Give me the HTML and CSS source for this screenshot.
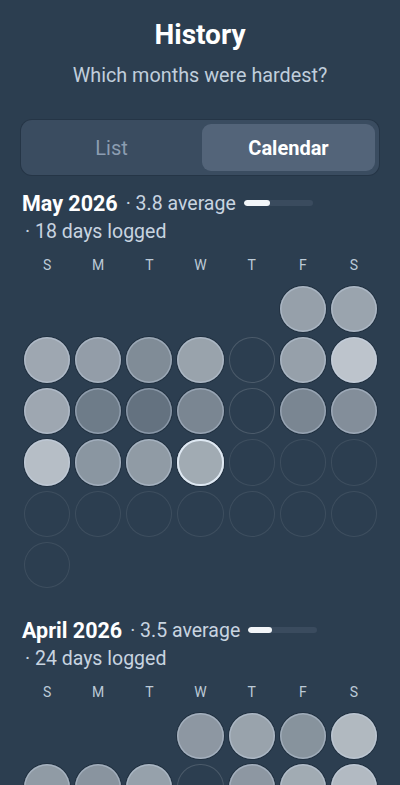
FILE: index.html
```html
<!DOCTYPE html>
<html lang="en">
<head>
<meta charset="utf-8">
<title>History</title>
<link rel="stylesheet" href="styles.css">
</head>
<body>
<main class="page">
  <header class="top">
    <h1 class="title">History</h1>
    <p class="subtitle">Which months were hardest?</p>
  </header>

  <div class="toggle">
    <button class="seg">List</button>
    <button class="seg active">Calendar</button>
  </div>

  <section class="month">
    <div class="month-head">
      <span class="month-name">May 2026</span>
      <span class="meta">· 3.8 average</span>
      <span class="bar"><span class="fill" style="width:38%"></span></span>
      <span class="meta meta-2">· 18 days logged</span>
    </div>
    <div class="dow"><span>S</span><span>M</span><span>T</span><span>W</span><span>T</span><span>F</span><span>S</span></div>
    <div class="grid">
      <span class="blank"></span><span class="blank"></span><span class="blank"></span><span class="blank"></span><span class="blank"></span>
      <span class="day on" style="--a:0.61"></span>
      <span class="day on" style="--a:0.64"></span>

      <span class="day on" style="--a:0.66"></span>
      <span class="day on" style="--a:0.60"></span>
      <span class="day on" style="--a:0.49"></span>
      <span class="day on" style="--a:0.63"></span>
      <span class="day missed"></span>
      <span class="day on" style="--a:0.61"></span>
      <span class="day on" style="--a:0.84"></span>

      <span class="day on" style="--a:0.66"></span>
      <span class="day on" style="--a:0.39"></span>
      <span class="day on" style="--a:0.33"></span>
      <span class="day on" style="--a:0.45"></span>
      <span class="day missed"></span>
      <span class="day on" style="--a:0.45"></span>
      <span class="day on" style="--a:0.50"></span>

      <span class="day on" style="--a:0.80"></span>
      <span class="day on" style="--a:0.55"></span>
      <span class="day on" style="--a:0.58"></span>
      <span class="day on today" style="--a:0.68"></span>
      <span class="day future"></span>
      <span class="day future"></span>
      <span class="day future"></span>

      <span class="day future"></span>
      <span class="day future"></span>
      <span class="day future"></span>
      <span class="day future"></span>
      <span class="day future"></span>
      <span class="day future"></span>
      <span class="day future"></span>

      <span class="day future"></span>
    </div>
  </section>

  <section class="month">
    <div class="month-head">
      <span class="month-name">April 2026</span>
      <span class="meta">· 3.5 average</span>
      <span class="bar"><span class="fill" style="width:35%"></span></span>
      <span class="meta meta-2">· 24 days logged</span>
    </div>
    <div class="dow"><span>S</span><span>M</span><span>T</span><span>W</span><span>T</span><span>F</span><span>S</span></div>
    <div class="grid">
      <span class="blank"></span><span class="blank"></span><span class="blank"></span>
      <span class="day on" style="--a:0.56"></span>
      <span class="day on" style="--a:0.63"></span>
      <span class="day on" style="--a:0.53"></span>
      <span class="day on" style="--a:0.77"></span>

      <span class="day on" style="--a:0.58"></span>
      <span class="day on" style="--a:0.54"></span>
      <span class="day on" style="--a:0.62"></span>
      <span class="day missed"></span>
      <span class="day on" style="--a:0.56"></span>
      <span class="day on" style="--a:0.68"></span>
      <span class="day on" style="--a:0.78"></span>

      <span class="day on" style="--a:0.50"></span>
      <span class="day on" style="--a:0.62"></span>
      <span class="day missed"></span>
      <span class="day on" style="--a:0.45"></span>
      <span class="day on" style="--a:0.58"></span>
      <span class="day on" style="--a:0.66"></span>
      <span class="day on" style="--a:0.72"></span>

      <span class="day on" style="--a:0.60"></span>
      <span class="day on" style="--a:0.40"></span>
      <span class="day on" style="--a:0.55"></span>
      <span class="day missed"></span>
      <span class="day on" style="--a:0.63"></span>
      <span class="day missed"></span>
      <span class="day on" style="--a:0.70"></span>

      <span class="day on" style="--a:0.52"></span>
      <span class="day on" style="--a:0.61"></span>
      <span class="day missed"></span>
      <span class="day on" style="--a:0.48"></span>
      <span class="day on" style="--a:0.66"></span>
    </div>
  </section>
</main>
</body>
</html>
```

FILE: styles.css
```css
* { box-sizing: border-box; }

html, body {
  margin: 0;
  padding: 0;
  background: #2c3e50;
}

body {
  font-family: Roboto, "Noto Sans", "Liberation Sans", sans-serif;
  color: #ffffff;
}

.page {
  padding: 18px 22px 40px;
}

.top {
  text-align: center;
}

.title {
  margin: 0;
  font-size: 28px;
  line-height: 34px;
  font-weight: 700;
  color: #ffffff;
}

.subtitle {
  margin: 10px 0 0;
  font-size: 19.8px;
  line-height: 28px;
  color: #c0cedc;
}

.toggle {
  margin: 30px -1px 0;
  display: grid;
  grid-template-columns: 1fr 1fr;
  gap: 4px;
  padding: 4px;
  background: #3a4c60;
  border-radius: 11px;
  box-shadow: 0 0 0 1px rgba(25, 38, 52, 0.35);
}

.seg {
  height: 47px;
  border: 0;
  border-radius: 9px;
  background: transparent;
  font-family: inherit;
  font-size: 20px;
  color: #8c9db1;
}

.seg.active {
  background: #536479;
  color: #ffffff;
  font-weight: 700;
}

.month {
  margin-top: 15px;
}

.month + .month {
  margin-top: 29px;
}

.month-head {
  display: flex;
  flex-wrap: wrap;
  align-items: center;
  column-gap: 8px;
  row-gap: 0;
}

.month-name {
  font-size: 21.5px;
  line-height: 28px;
  font-weight: 700;
  color: #ffffff;
}

.meta {
  font-size: 19.5px;
  line-height: 28px;
  color: #c8d4e0;
}

.meta-2 {
  margin-left: 3px;
}

.bar {
  width: 69px;
  height: 6px;
  border-radius: 3px;
  background: #3a4b5e;
  overflow: hidden;
  margin-top: -2px;
}

.fill {
  display: block;
  height: 100%;
  border-radius: 3px;
  background: #f2f5f8;
}

.dow {
  margin-top: 11px;
  display: grid;
  grid-template-columns: repeat(7, 1fr);
  gap: 5px;
  padding: 0 1px 0 2px;
  text-align: center;
  font-size: 14px;
  line-height: 16px;
  font-weight: 400;
  color: #bccad7;
}

.grid {
  margin-top: 13px;
  display: grid;
  grid-template-columns: repeat(7, 1fr);
  gap: 5px;
  padding: 0 1px 0 2px;
}

.day, .blank {
  aspect-ratio: 1 / 1;
  border-radius: 50%;
}

.day.on {
  background: rgba(217, 222, 227, var(--a));
  box-shadow: inset 0 0 0 1.5px rgba(205, 222, 240, 0.35), 0 0 0 1px rgba(15, 25, 38, 0.35);
}

.day.today {
  box-shadow: inset 0 0 0 2px rgba(225, 235, 245, 0.95), 0 0 0 1px rgba(15, 25, 38, 0.4);
}

.day.missed {
  box-shadow: inset 0 0 0 1px rgba(255, 255, 255, 0.15);
}

.day.future {
  box-shadow: inset 0 0 0 1px rgba(255, 255, 255, 0.085);
}
```
